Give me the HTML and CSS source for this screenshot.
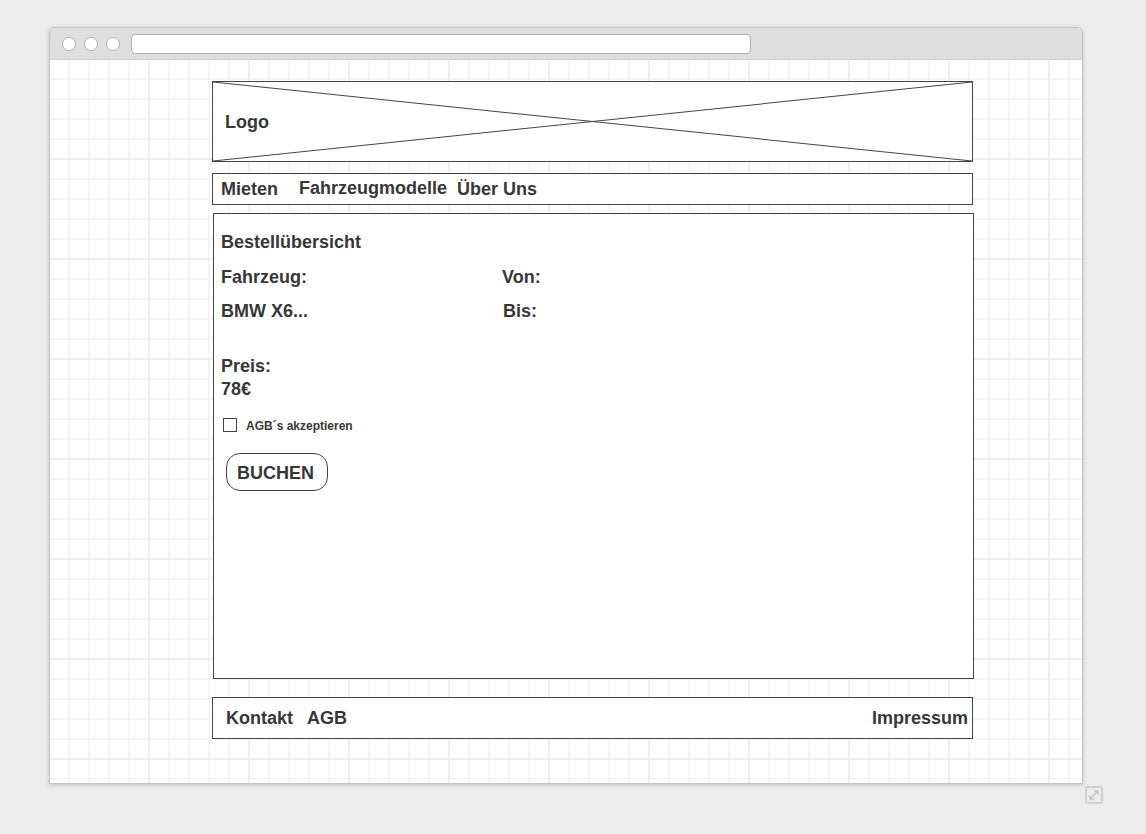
FILE: index.html
```html
<!DOCTYPE html>
<html lang="de">
<head>
<meta charset="utf-8">
<title>Wireframe</title>
<link rel="stylesheet" href="styles.css">
</head>
<body>
<div class="window">
  <div class="chrome">
    <span class="dot"></span><span class="dot"></span><span class="dot"></span>
    <div class="url"></div>
  </div>
  <div class="canvas">
    <div class="page">
      <header class="logo-box">
        <svg class="cross" viewBox="0 0 100 100" preserveAspectRatio="none">
          <line x1="0" y1="0" x2="100" y2="100" vector-effect="non-scaling-stroke"/>
          <line x1="0" y1="100" x2="100" y2="0" vector-effect="non-scaling-stroke"/>
        </svg>
        <span class="logo-text">Logo</span>
      </header>
      <nav class="nav">
        <span class="nav-mieten">Mieten</span>
        <span class="nav-modelle">Fahrzeugmodelle</span>
        <span>Über Uns</span>
      </nav>
      <main class="content">
        <div class="title">Bestellübersicht</div>
        <div class="row row-first"><span>Fahrzeug:</span><span>Von:</span></div>
        <div class="row row-second"><span>BMW X6...</span><span class="bis">Bis:</span></div>
        <div class="price-label">Preis:</div>
        <div class="price">78€</div>
        <label class="agb"><span class="check"></span><span class="agb-text">AGB´s akzeptieren</span></label>
        <div class="btn">BUCHEN</div>
      </main>
      <footer class="footer">
        <span class="f-kontakt">Kontakt</span>
        <span>AGB</span>
        <span class="f-impressum">Impressum</span>
      </footer>
    </div>
  </div>
</div>
<div class="resize">
  <svg width="18" height="18" viewBox="0 0 18 18">
    <rect x="1" y="1" width="16" height="16" rx="1.5" fill="none" stroke="#c9c9c9" stroke-width="1.6"/>
    <path d="M5 13 L13 5 M9 5 H13 V9 M5 9 V13 H9" fill="none" stroke="#c4c4c4" stroke-width="1.4"/>
  </svg>
</div>
</body>
</html>
```

FILE: styles.css
```css
* { box-sizing: border-box; }
html, body { margin: 0; padding: 0; }
body {
  background: #ececec;
  width: 1146px;
  height: 834px;
  overflow: hidden;
  font-family: "Liberation Sans", Arial, sans-serif;
  color: #373737;
  position: relative;
}
.window {
  position: absolute;
  left: 49px;
  top: 27px;
  width: 1034px;
  height: 757px;
  border: 1px solid #c4c4c4;
  border-radius: 5px 5px 0 0;
  background: #fff;
  box-shadow: 0 1px 4px rgba(0,0,0,0.18);
  display: flex;
  flex-direction: column;
  overflow: hidden;
}
.chrome {
  height: 32px;
  background: #dedede;
  border-bottom: 1px solid #cfcfcf;
  display: flex;
  align-items: center;
  padding-left: 12px;
  flex: none;
}
.dot {
  width: 14px;
  height: 14px;
  border-radius: 50%;
  background: #fff;
  border: 1px solid #b3b3b3;
  margin-right: 8px;
  margin-top: 1px;
}
.url {
  margin-left: 3px;
  width: 620px;
  height: 20px;
  background: #fff;
  border: 1px solid #b3b3b3;
  border-radius: 4px;
  margin-top: 1px;
}
.canvas {
  flex: 1;
  background-color: #fff;
  background-image:
    linear-gradient(to right, #eeeeee 2px, transparent 2px),
    linear-gradient(to bottom, #eeeeee 2px, transparent 2px),
    linear-gradient(to right, #f5f5f5 2px, transparent 2px),
    linear-gradient(to bottom, #f5f5f5 2px, transparent 2px);
  background-size: 100px 100px, 100px 100px, 20px 20px, 20px 20px;
  background-position: 98px 0, 0 98px, 18px 0, 0 18px;
  padding-top: 21px;
}
.page {
  margin-left: 162px;
  width: 761px;
  font-weight: bold;
  font-size: 18px;
}
.logo-box {
  position: relative;
  height: 81px;
  border: 1px solid #444;
  background: #fff;
  display: flex;
  align-items: center;
  padding-left: 12px;
  padding-top: 2px;
}
.cross {
  position: absolute;
  left: 0; top: 0;
  width: 100%;
  height: 100%;
}
.cross line { stroke: #444; stroke-width: 1; }
.logo-text { position: relative; }
.nav {
  margin-top: 11px;
  height: 32px;
  border: 1px solid #444;
  background: #fff;
  display: flex;
  align-items: center;
  padding-left: 8px;
}
.nav-mieten { margin-right: 21px; padding-top: 1px; }
.nav-modelle { margin-right: 10px; margin-top: -2px; }
.content {
  margin-top: 8px;
  margin-left: 1px;
  width: 761px;
  height: 466px;
  border: 1px solid #444;
  background: #fff;
  padding: 17px 8px 0 7px;
  line-height: 22px;
}
.row {
  display: grid;
  grid-template-columns: 281px 1fr;
}
.row-first { margin-top: 13px; }
.row-second { margin-top: 12px; }
.bis { padding-left: 1px; }
.price-label { margin-top: 33px; }
.price { margin-top: 1px; }
.agb {
  display: flex;
  align-items: flex-start;
  height: 14px;
  margin-top: 18px;
  font-size: 12px;
  line-height: 14px;
  padding-left: 2px;
}
.agb-text { padding-top: 1px; }
.check {
  width: 14px;
  height: 14px;
  border: 1px solid #444;
  margin-right: 9px;
  background: #fff;
}
.btn {
  margin-top: 21px;
  margin-left: 5px;
  width: 102px;
  height: 38px;
  border: 1px solid #444;
  border-radius: 14px;
  display: flex;
  align-items: center;
  padding-left: 10px;
  padding-top: 1px;
}
.footer {
  margin-top: 18px;
  height: 42px;
  border: 1px solid #444;
  background: #fff;
  display: flex;
  align-items: center;
  padding: 0 4px 0 13px;
}
.f-kontakt { margin-right: 14px; }
.f-impressum { margin-left: auto; }
.resize {
  position: absolute;
  left: 1085px;
  top: 786px;
  width: 18px;
  height: 18px;
}
.resize svg { display: block; }
```
